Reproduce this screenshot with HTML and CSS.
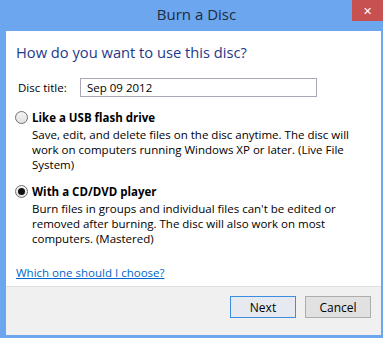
FILE: index.html
```html
<!DOCTYPE html>
<html lang="en">
<head>
    <meta charset="UTF-8">
    <title>Burn a Disc</title>
    <link rel="stylesheet" href="styles.css">
</head>
<body>
    <div class="window">
        <div class="titlebar">
            <span class="title">Burn a Disc</span>
            <span class="close">&#x2715;</span>
        </div>

        <div class="client">
            <div class="content">
                <h1>How do you want to use this disc?</h1>

                <div class="title-row">
                    <label for="discTitle">Disc title:</label>
                    <input type="text" id="discTitle" value="Sep 09 2012">
                </div>

                <div class="option">
                    <div class="option-label"><span class="radio"></span>Like a USB flash drive</div>
                    <p>Save, edit, and delete files on the disc anytime. The disc will<br>work on computers running Windows XP or later. (Live File<br>System)</p>
                </div>

                <div class="option">
                    <div class="option-label"><span class="radio checked"></span>With a CD/DVD player</div>
                    <p>Burn files in groups and individual files can't be edited or<br>removed after burning. The disc will also work on most<br>computers. (Mastered)</p>
                </div>

                <a href="#" class="help">Which one should I choose?</a>
            </div>

            <div class="footer">
                <button class="default">Next</button>
                <button>Cancel</button>
            </div>
        </div>
    </div>
</body>
</html>
```

FILE: styles.css
```css
:root {
    --frame: #6ba6ef;
    --heading: #1e3a8c;
    --link: #0066cc;
}

body {
    margin: 0;
    font-family: "Open Sans", "Noto Sans", sans-serif;
    font-size: 11.5px;
    color: #000;
}

.window {
    width: 383px;
    height: 338px;
    background: var(--frame);
    display: flex;
    flex-direction: column;
}

.titlebar {
    height: 31px;
    display: flex;
    align-items: flex-start;
    justify-content: center;
    position: relative;
}

.title {
    margin-top: 4px;
    font-size: 15px;
    color: #1f2b3e;
    padding-left: 10px;
}

.close {
    position: absolute;
    top: 0;
    right: 0;
    width: 31px;
    height: 21px;
    background: #c75050;
    color: #fff;
    font-size: 11px;
    display: flex;
    align-items: center;
    justify-content: center;
}

.client {
    flex: 1;
    margin: 0 2px 3px 6px;
    background: #fff;
    display: flex;
    flex-direction: column;
}

.content {
    flex: 1;
    padding: 11px 10px 0 10px;
}

h1 {
    margin: 0;
    font-size: 14.7px;
    font-weight: 400;
    line-height: 20px;
    color: var(--heading);
}

.title-row {
    display: flex;
    align-items: center;
    margin-top: 16px;
    padding-left: 2px;
}

.title-row label {
    width: 62px;
}

.title-row input {
    width: 237px;
    height: 19px;
    box-sizing: border-box;
    border: 1px solid #aba6b8;
    padding: 0 6px;
    font-family: inherit;
    font-size: 11.5px;
    outline: none;
}

.option {
    margin-top: 13px;
}

.option + .option {
    margin-top: 12px;
}

.option-label {
    display: flex;
    align-items: center;
    font-weight: 700;
    line-height: 15px;
}

.radio {
    width: 13px;
    height: 13px;
    box-sizing: border-box;
    border: 1px solid #707070;
    border-radius: 50%;
    background: linear-gradient(#f4f4f4, #e2e2e2);
    margin-left: -1px;
    margin-right: 4px;
    display: flex;
    align-items: center;
    justify-content: center;
}

.radio.checked::after {
    content: '';
    width: 7px;
    height: 7px;
    border-radius: 50%;
    background: #111;
}

.option p {
    margin: 2px 0 0 16px;
    line-height: 15px;
}

.help {
    display: inline-block;
    margin-top: 19px;
    color: var(--link);
    line-height: 15px;
}

.footer {
    height: 39px;
    border-top: 1px solid #dfdfdf;
    background: #f0f0f0;
    display: flex;
    justify-content: flex-end;
    align-items: flex-start;
    gap: 9px;
    padding: 9px 10px 0 0;
}

button {
    width: 66px;
    height: 22px;
    border: 1px solid #adadad;
    background: #e1e1e1;
    font-family: inherit;
    font-size: 12px;
    color: #000;
    padding: 0;
}

button.default {
    border-color: #3c8fe0;
    background: #e6eaf0;
}
```
